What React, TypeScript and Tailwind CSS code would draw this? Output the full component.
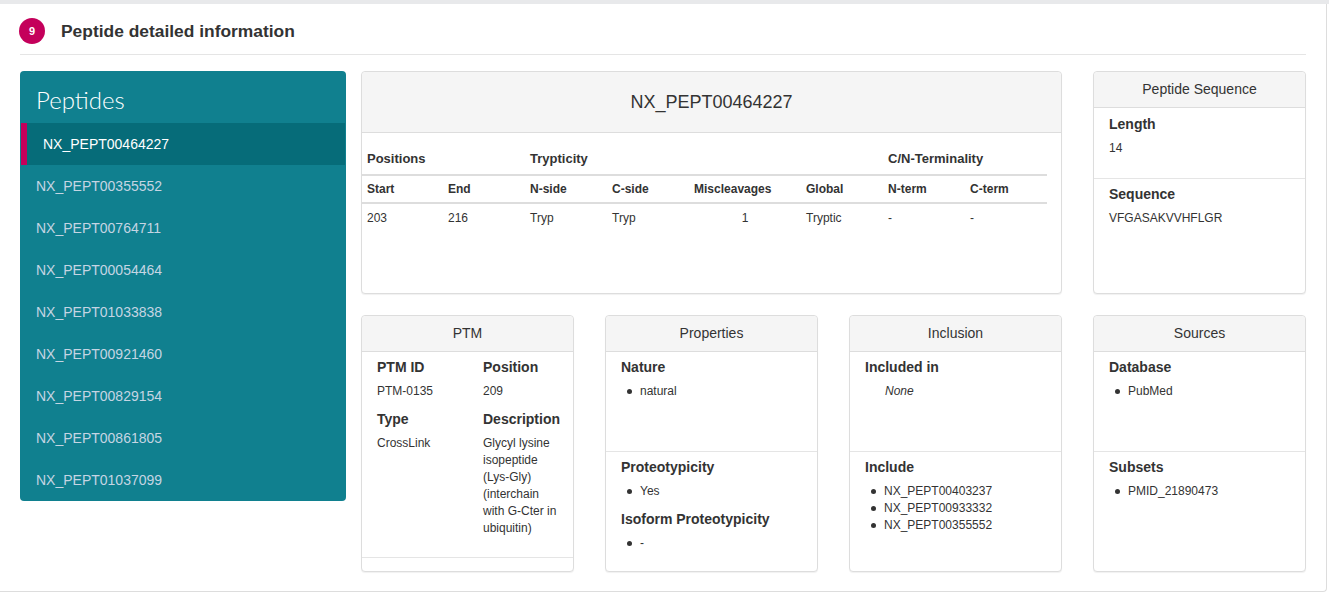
import type { ReactNode } from 'react';

const peptides = [
  'NX_PEPT00464227',
  'NX_PEPT00355552',
  'NX_PEPT00764711',
  'NX_PEPT00054464',
  'NX_PEPT01033838',
  'NX_PEPT00921460',
  'NX_PEPT00829154',
  'NX_PEPT00861805',
  'NX_PEPT01037099',
];

function Card({ title, children, className = '' }: { title: string; children: ReactNode; className?: string }) {
  return (
    <div className={`flex flex-col rounded-[4px] border border-[#ddd] bg-white shadow-[0_1px_1px_rgba(0,0,0,0.06)] ${className}`}>
      <div className="h-[36px] shrink-0 flex items-center justify-center bg-[#f5f5f5] border-b border-[#ddd] rounded-t-[4px] text-[14px] text-[#333]">
        {title}
      </div>
      {children}
    </div>
  );
}

function Label({ children, className = '' }: { children: ReactNode; className?: string }) {
  return <div className={`text-[14px] font-bold leading-[18px] text-[#333] ${className}`}>{children}</div>;
}

function Value({ children, className = '' }: { children: ReactNode; className?: string }) {
  return <div className={`mt-[7px] text-[12px] leading-[17px] text-[#333] ${className}`}>{children}</div>;
}

function Bullets({ items }: { items: string[] }) {
  return (
    <ul className="mt-[7px] text-[12px] leading-[17px] text-[#333]">
      {items.map((it) => (
        <li key={it} className="flex items-center">
          <span className="ml-[6px] mr-[8px] w-[5px] h-[5px] rounded-full bg-[#333] shrink-0" />
          {it}
        </li>
      ))}
    </ul>
  );
}

export default function App() {
  const th1 = 'pt-[7px] pb-[6px] pl-[5px] text-left text-[13px] font-bold leading-[18px] border-b-2 border-[#ddd]';
  const th2 = 'py-[4px] pl-[5px] text-left text-[12px] font-bold leading-[18px] border-b-2 border-[#ddd]';
  const td = 'pt-[5px] pb-[3px] pl-[5px] text-left text-[12px] leading-[18px]';

  return (
    <div className="h-[594px] bg-white font-['Liberation_Sans',Arial,sans-serif] text-[#333] overflow-hidden">
      <div className="h-[4px] bg-[#e8e9eb]" />
      <div className="w-[1327px] h-[588px] border-r border-b border-[#ddd] rounded-br-[4px] px-5">
        {/* titre de section */}
        <div className="pt-[14px] flex items-center gap-[16px]">
          <div className="w-[26px] h-[26px] ml-[-1px] rounded-full bg-[#c4005b] flex items-center justify-center text-white text-[11px] font-bold">
            9
          </div>
          <h2 className="text-[17.4px] font-bold text-[#333] leading-[26px]">Peptide detailed information</h2>
        </div>
        <div className="mt-[10px] h-px bg-[#e5e5e5]" />

        <div className="mt-[16px] flex gap-[15px] items-start">
          {/* liste des peptides */}
          <div className="w-[326px] h-[430px] rounded-[4px] bg-[#10808f]">
            <div className="h-[52px] pt-[15px] pl-4 text-[24px] leading-[28px] font-['Lato',sans-serif] font-light text-white">
              Peptides
            </div>
            {peptides.map((p, i) =>
              i === 0 ? (
                <div key={p} className="mx-px h-[42px] flex items-center bg-[#066c79]">
                  <div className="w-[6px] h-full bg-[#c4005b]" />
                  <span className="pl-4 text-[14px] text-white">{p}</span>
                </div>
              ) : (
                <div key={p} className="h-[42px] flex items-center pl-4 text-[14px] text-[#c5d5e3]">
                  {p}
                </div>
              )
            )}
          </div>

          <div className="w-[945px] grid grid-cols-4 gap-x-[31px] gap-y-[21px]">
            {/* carte principale */}
            <div className="col-span-3 h-[223px] rounded-[4px] border border-[#ddd] bg-white shadow-[0_1px_1px_rgba(0,0,0,0.06)]">
              <div className="h-[61px] flex items-center justify-center bg-[#f5f5f5] border-b border-[#ddd] rounded-t-[4px] text-[18px] text-[#333]">
                NX_PEPT00464227
              </div>
              <table className="mt-[10px] w-[685px] table-fixed border-separate border-spacing-0">
                <colgroup>
                  <col className="w-[81px]" />
                  <col className="w-[82px]" />
                  <col className="w-[82px]" />
                  <col className="w-[82px]" />
                  <col className="w-[112px]" />
                  <col className="w-[82px]" />
                  <col className="w-[82px]" />
                  <col className="w-[82px]" />
                </colgroup>
                <thead>
                  <tr>
                    <th colSpan={2} className={th1}>Positions</th>
                    <th colSpan={4} className={th1}>Trypticity</th>
                    <th colSpan={2} className={th1}>C/N-Terminality</th>
                  </tr>
                  <tr>
                    <th className={th2}>Start</th>
                    <th className={th2}>End</th>
                    <th className={th2}>N-side</th>
                    <th className={th2}>C-side</th>
                    <th className={th2}>Miscleavages</th>
                    <th className={th2}>Global</th>
                    <th className={th2}>N-term</th>
                    <th className={th2}>C-term</th>
                  </tr>
                </thead>
                <tbody>
                  <tr>
                    <td className={td}>203</td>
                    <td className={td}>216</td>
                    <td className={td}>Tryp</td>
                    <td className={td}>Tryp</td>
                    <td className="pt-[5px] pb-[3px] text-center text-[12px] leading-[18px]">1</td>
                    <td className={td}>Tryptic</td>
                    <td className={td}>-</td>
                    <td className={td}>-</td>
                  </tr>
                </tbody>
              </table>
            </div>

            <Card title="Peptide Sequence" className="h-[223px]">
              <div className="h-[71px] px-[15px] pt-[7px] border-b border-[#e5e5e5]">
                <Label>Length</Label>
                <Value>14</Value>
              </div>
              <div className="flex-1 px-[15px] pt-[6px]">
                <Label>Sequence</Label>
                <Value>VFGASAKVVHFLGR</Value>
              </div>
            </Card>

            <Card title="PTM" className="h-[257px]">
              <div className="h-[206px] px-[15px] pt-[6px] border-b border-[#e5e5e5] grid grid-cols-[106px_1fr]">
                <div>
                  <Label>PTM ID</Label>
                  <Value>PTM-0135</Value>
                  <Label className="mt-[10px]">Type</Label>
                  <Value>CrossLink</Value>
                </div>
                <div>
                  <Label>Position</Label>
                  <Value>209</Value>
                  <Label className="mt-[10px]">Description</Label>
                  <Value className="w-[78px]">Glycyl lysine isopeptide (Lys-Gly) (interchain with G-Cter in ubiquitin)</Value>
                </div>
              </div>
            </Card>

            <Card title="Properties" className="h-[257px]">
              <div className="h-[100px] px-[15px] pt-[6px] border-b border-[#e5e5e5]">
                <Label>Nature</Label>
                <Bullets items={['natural']} />
              </div>
              <div className="flex-1 px-[15px] pt-[6px]">
                <Label>Proteotypicity</Label>
                <Bullets items={['Yes']} />
                <Label className="mt-[10px]">Isoform Proteotypicity</Label>
                <Bullets items={['-']} />
              </div>
            </Card>

            <Card title="Inclusion" className="h-[257px]">
              <div className="h-[100px] px-[15px] pt-[6px] border-b border-[#e5e5e5]">
                <Label>Included in</Label>
                <Value className="pl-5 italic">None</Value>
              </div>
              <div className="flex-1 px-[15px] pt-[6px]">
                <Label>Include</Label>
                <Bullets items={['NX_PEPT00403237', 'NX_PEPT00933332', 'NX_PEPT00355552']} />
              </div>
            </Card>

            <Card title="Sources" className="h-[257px]">
              <div className="h-[100px] px-[15px] pt-[6px] border-b border-[#e5e5e5]">
                <Label>Database</Label>
                <Bullets items={['PubMed']} />
              </div>
              <div className="flex-1 px-[15px] pt-[6px]">
                <Label>Subsets</Label>
                <Bullets items={['PMID_21890473']} />
              </div>
            </Card>
          </div>
        </div>
      </div>
    </div>
  );
}
